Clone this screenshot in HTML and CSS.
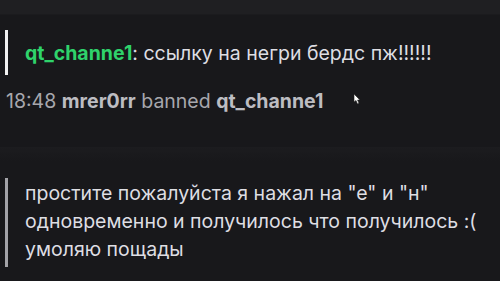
FILE: index.html
```html
<!DOCTYPE html>
<html>
<head>
<meta charset="utf-8">
<link rel="stylesheet" href="styles.css">
</head>
<body>
<div class="chat">
  <div class="top-band"></div>
  <div class="msg highlight"><span class="name">qt_channe1</span>: ссылку на негри бердс пж!!!!!!</div>
  <div class="system">
    <span class="time">18:48</span> <b>mrer0rr</b> banned <b>qt_channe1</b>
    <svg class="cursor" width="8" height="11" viewBox="0 0 8 11"><path d="M1 0 L1 8 L3 6.5 L4.5 10 L6 9.3 L4.6 6 L7 6 Z" fill="#fff" stroke="#222" stroke-width="0.6"/></svg>
  </div>
  <div class="divider"></div>
  <div class="msg reply">простите пожалуйста я нажал на "е" и "н" одновременно и получилось что получилось :( умоляю пощады</div>
</div>
</body>
</html>
```

FILE: styles.css
```css
html, body {
  margin: 0;
  padding: 0;
  background: #18181b;
  width: 500px;
  height: 281px;
  overflow: hidden;
}
.chat {
  font-family: Inter, "Noto Sans", sans-serif;
  font-size: 19.5px;
  color: #dedee3;
  display: flex;
  flex-direction: column;
}
.top-band {
  height: 14px;
  background: #1f1f22;
  border-bottom: 1px solid #1b1b1e;
}
.msg.highlight {
  margin: 15px 0 0 5px;
  border-left: 3px solid #f2f2f2;
  height: 45px;
  line-height: 45px;
  padding-left: 17px;
  padding-top: 1px;
  box-sizing: border-box;
  white-space: nowrap;
}
.name {
  color: #2fd36b;
  font-weight: 700;
}
.system {
  position: relative;
  margin-top: 16px;
  padding-left: 6px;
  color: #a7a7ad;
  height: 20px;
  line-height: 20px;
}
.system b {
  color: #bdbdc2;
  font-weight: 700;
}
.cursor {
  position: absolute;
  left: 353px;
  top: 3px;
}
.divider {
  margin-top: 36px;
  height: 14px;
  background: linear-gradient(#1c1c1f, #18181b);
}
.msg.reply {
  margin: 17px 0 0 5px;
  border-left: 3px solid #a3a3a8;
  padding: 1px 15px 0 17px;
  line-height: 28px;
  height: 89px;
  box-sizing: border-box;
  color: #dedee3;
}
```
